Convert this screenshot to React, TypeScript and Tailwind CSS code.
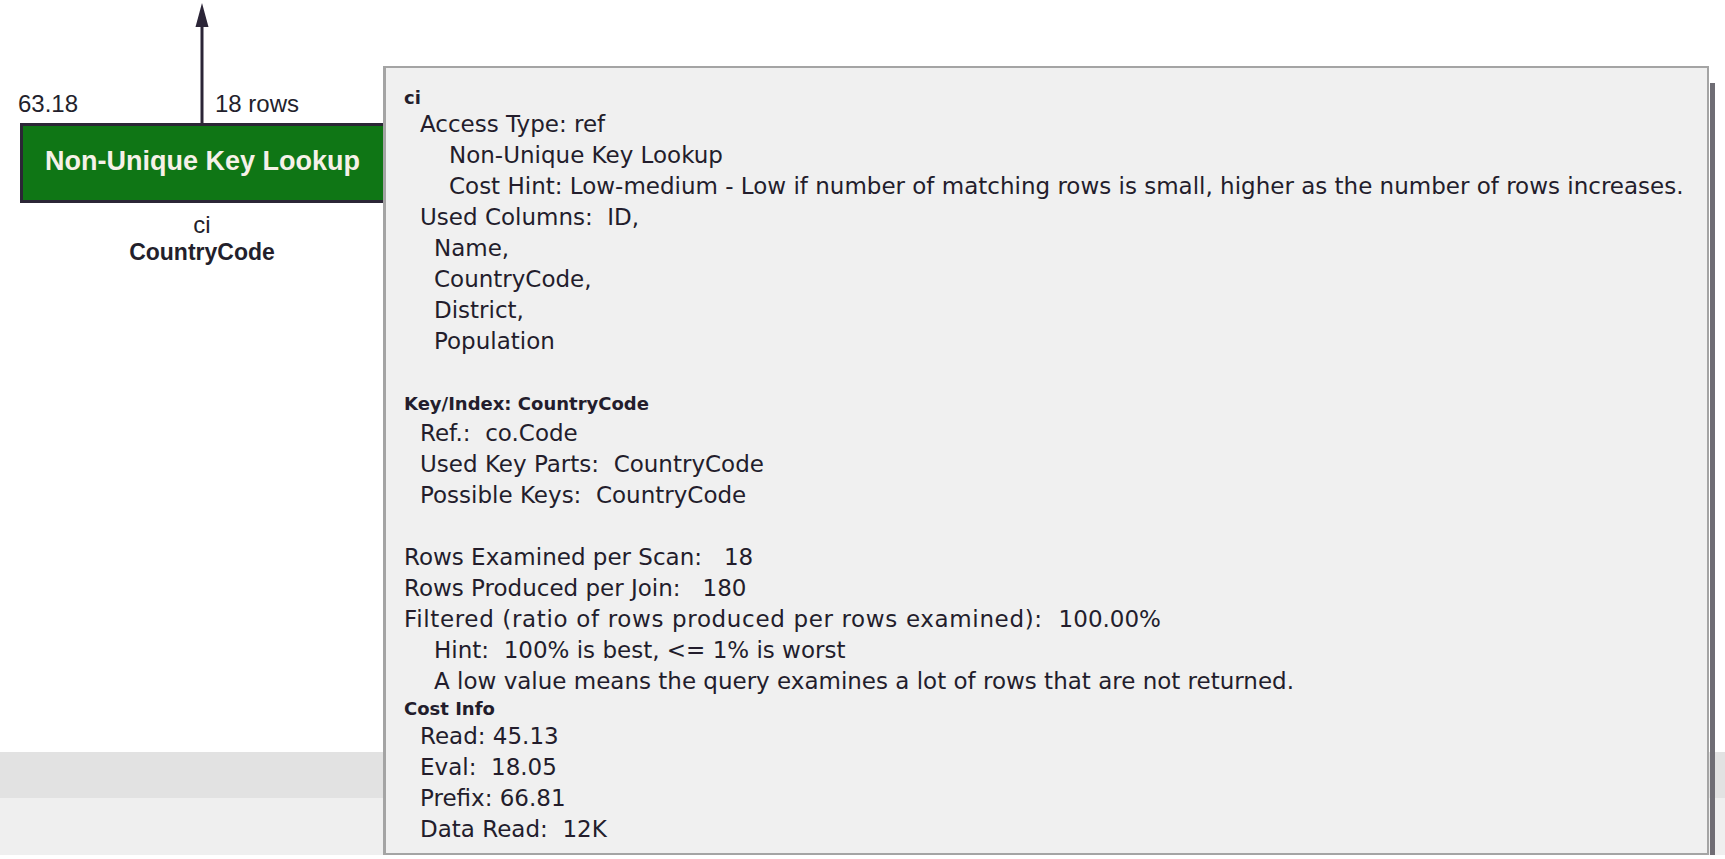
const panelFont = { fontFamily: '"DejaVu Sans", Verdana, sans-serif' };

type Line = { text: string; indent: 0 | 1 | 2 | 3; value?: string };

const indentClass = {
  0: "pl-0",
  1: "pl-[16px]",
  2: "pl-[30px]",
  3: "pl-[45px]",
};

function Row({ text, indent, value }: Line) {
  // lines with a value: the label is set a touch wider, as in the reference
  if (value) {
    return (
      <div className={`whitespace-pre leading-[31px] ${indentClass[indent]}`}>
        <span className="tracking-[0.65px]">{text}</span>
        {value}
      </div>
    );
  }
  return <div className={`whitespace-pre leading-[31px] ${indentClass[indent]}`}>{text}</div>;
}

const accessLines: Line[] = [
  { text: "Access Type: ref", indent: 1 },
  { text: "Non-Unique Key Lookup", indent: 3 },
  { text: "Cost Hint: Low-medium - Low if number of matching rows is small, higher as the number of rows increases.", indent: 3 },
  { text: "Used Columns:  ID,", indent: 1 },
  { text: "Name,", indent: 2 },
  { text: "CountryCode,", indent: 2 },
  { text: "District,", indent: 2 },
  { text: "Population", indent: 2 },
];

const keyLines: Line[] = [
  { text: "Ref.:  co.Code", indent: 1 },
  { text: "Used Key Parts:  CountryCode", indent: 1 },
  { text: "Possible Keys:  CountryCode", indent: 1 },
];

const rowLines: Line[] = [
  { text: "Rows Examined per Scan:   18", indent: 0 },
  { text: "Rows Produced per Join:   180", indent: 0 },
  { text: "Filtered (ratio of rows produced per rows examined):  ", indent: 0, value: "100.00%" },
  { text: "Hint:  100% is best, <= 1% is worst", indent: 2 },
  { text: "A low value means the query examines a lot of rows that are not returned.", indent: 2 },
];

const costLines: Line[] = [
  { text: "Read: 45.13", indent: 1 },
  { text: "Eval:  18.05", indent: 1 },
  { text: "Prefix: 66.81", indent: 1 },
  { text: "Data Read:  12K", indent: 1 },
];

function NodeBox() {
  return (
    <div className="absolute left-[20px] top-0 w-[364px] text-[#231f2c]" style={{ fontFamily: '"Liberation Sans", Arial, sans-serif' }}>
      <div className="grid h-[123px] grid-cols-[174px_16px_174px] items-end pb-[5px] text-[24px] leading-[28px]">
        <span className="-ml-[2px]">63.18</span>
        <svg width="16" height="123" viewBox="0 0 16 123" className="-mb-[5px] self-end">
          <polygon points="8,3 14.5,27 1.5,27" fill="#2b2537" />
          <line x1="8" y1="26" x2="8" y2="123" stroke="#2b2537" strokeWidth="3" />
        </svg>
        <span className="pl-[5px]">18 rows</span>
      </div>
      <div className="flex h-[80px] items-center justify-center border-y-[3px] border-l-[3px] border-[#2b2636] bg-[#0f7615] pb-[3px] pr-[2px] text-[27px] font-bold text-[#f6f1e8]">
        Non-Unique Key Lookup
      </div>
      <div className="mt-[8px] text-center text-[24px] leading-[28px]">ci</div>
      <div className="text-center text-[23px] font-bold leading-[26px]">CountryCode</div>
    </div>
  );
}

function Tooltip() {
  return (
    <div
      className="absolute left-[383px] top-[66px] h-[789px] w-[1326px] border-[2px] border-l-[3px] border-[#a4a4a4] bg-[#f0f0f0] pl-[18px] pr-2 text-[23px] text-[#231d2c]"
      style={panelFont}
    >
      <div className="absolute -right-[8px] top-[15px] bottom-[-2px] w-[5px] bg-[#6f6d74]" />
      <div className="pt-[19px] text-[18px] font-bold leading-[22px]">ci</div>
      {accessLines.map((l, i) => (
        <Row key={"a" + i} {...l} />
      ))}
      <div className="mt-[32px] text-[18px] font-bold leading-[29px]">Key/Index: CountryCode</div>
      {keyLines.map((l, i) => (
        <Row key={"k" + i} {...l} />
      ))}
      <div className="h-[31px]" />
      {rowLines.map((l, i) => (
        <Row key={"r" + i} {...l} />
      ))}
      <div className="text-[18px] font-bold leading-[24px]">Cost Info</div>
      {costLines.map((l, i) => (
        <Row key={"c" + i} {...l} />
      ))}
    </div>
  );
}

export default function App() {
  return (
    <div className="relative flex h-[859px] w-[1725px] flex-col overflow-hidden bg-white">
      <div className="relative h-[752px]">
        <NodeBox />
      </div>
      <div className="h-[46px] bg-[#e2e2e2]" />
      <div className="h-[57px] bg-[#efefef]" />
      <Tooltip />
    </div>
  );
}
